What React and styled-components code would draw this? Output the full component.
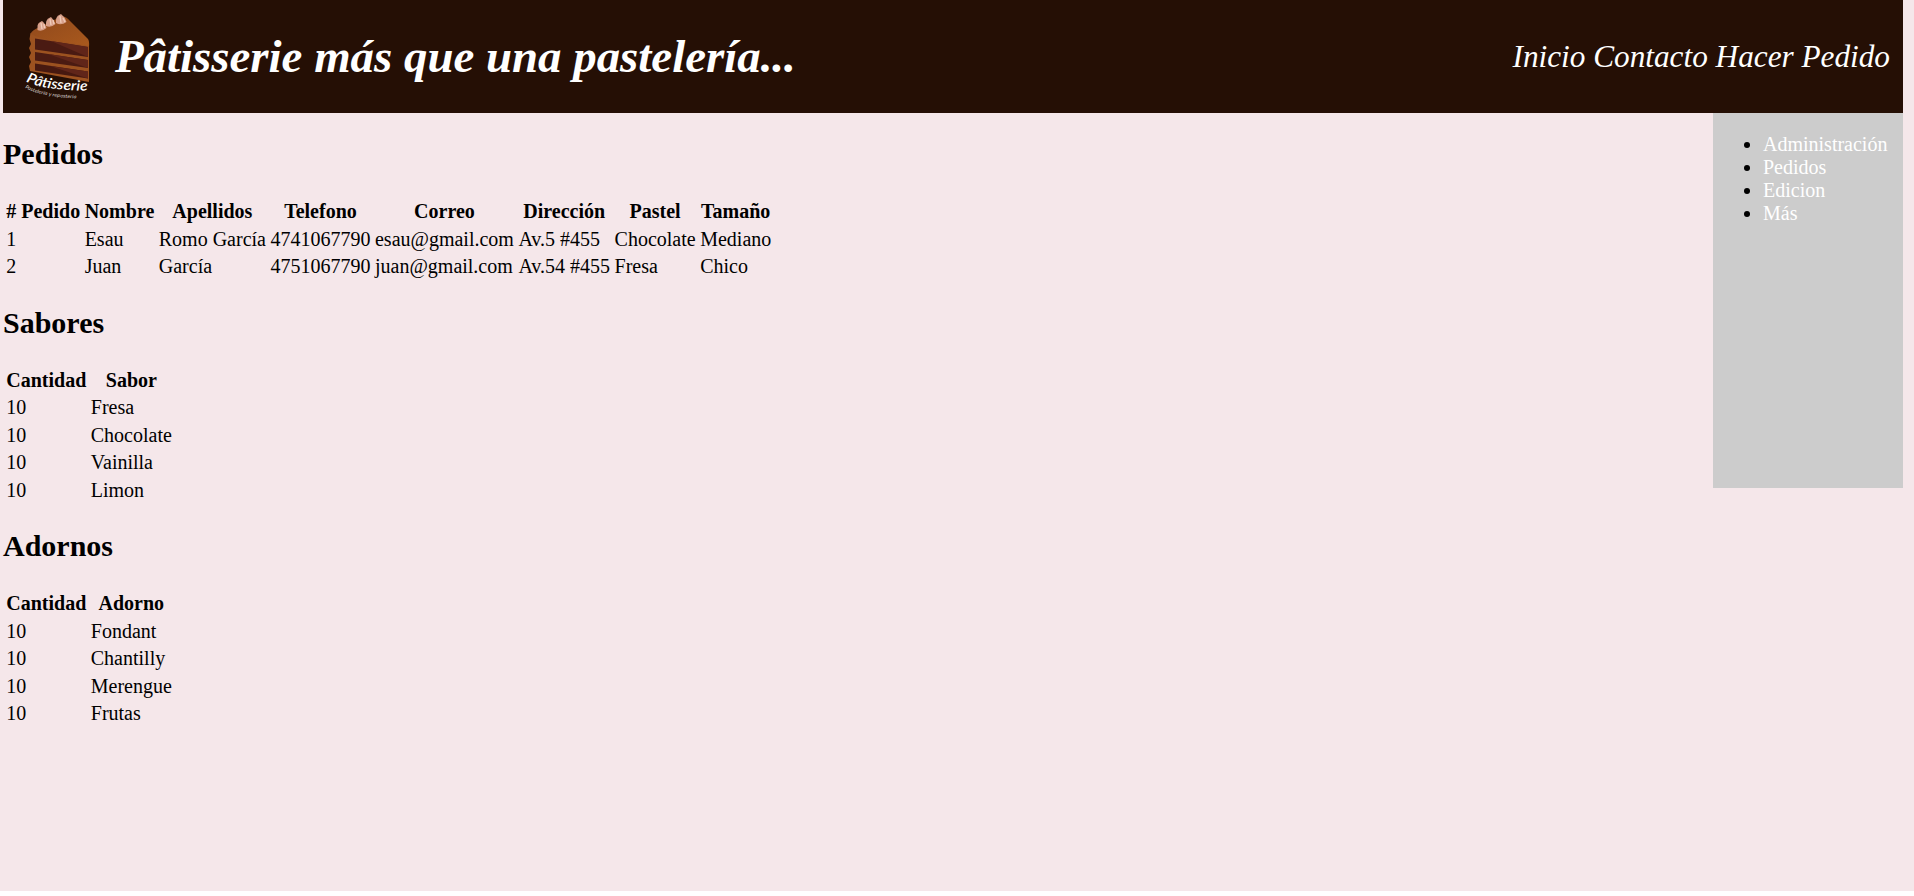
import React from "react";
import styled, { createGlobalStyle } from "styled-components";

const GlobalStyle = createGlobalStyle`
  html {
    background: #fff;
  }

  body {
    margin: 0;
    font-family: "Liberation Serif", "Times New Roman", serif;
    font-size: 20px;
    line-height: 23px;
    color: #000;
  }
`;

const Page = styled.div`
  box-sizing: border-box;
  height: 891px;
  padding: 0 11px 0 3px;
  background: #f5e7ea;
`;

const Header = styled.header`
  display: flex;
  align-items: center;
  height: 113px;
  background: #250f05;
  color: #fff;
`;

const Logo = styled.svg`
  flex: none;
  width: 112px;
  height: 113px;
`;

const Title = styled.h1`
  margin: 0 0 2px;
  font-size: 46.875px;
  line-height: 54px;
  font-style: italic;
  font-weight: bold;
`;

const Nav = styled.nav`
  display: flex;
  gap: 7.8px;
  margin-left: auto;
  padding-right: 13px;
`;

const NavLink = styled.a`
  font-size: 31.25px;
  line-height: 36px;
  font-style: italic;
  color: #fff;
`;

const Body = styled.div`
  display: flex;
  justify-content: space-between;
  align-items: flex-start;
`;

const Content = styled.main`
  display: flex;
  flex-direction: column;
  align-items: flex-start;
`;

const SectionTitle = styled.h2`
  margin: 25px 0 27px;
  font-size: 30px;
  line-height: 32px;
  font-weight: bold;
`;

const Table = styled.table`
  border-spacing: 2.5px;
`;

const HeadCell = styled.th`
  padding: 1.25px;
  font-weight: bold;
  text-align: center;
  white-space: nowrap;
`;

const Cell = styled.td`
  padding: 1.25px;
  white-space: nowrap;
`;

const Sidebar = styled.aside`
  width: 190px;
  height: 375px;
  background: #ccc;
`;

const Menu = styled.ul`
  margin: 20px 0;
  padding-left: 50px;
  line-height: 23px;
`;

const MenuLink = styled.a`
  color: #fff;
`;

const sections = [
  {
    title: "Pedidos",
    columns: ["# Pedido", "Nombre", "Apellidos", "Telefono", "Correo", "Dirección", "Pastel", "Tamaño"],
    rows: [
      ["1", "Esau", "Romo García", "4741067790", "esau@gmail.com", "Av.5 #455", "Chocolate", "Mediano"],
      ["2", "Juan", "García", "4751067790", "juan@gmail.com", "Av.54 #455", "Fresa", "Chico"],
    ],
  },
  {
    title: "Sabores",
    columns: ["Cantidad", "Sabor"],
    rows: [["10", "Fresa"], ["10", "Chocolate"], ["10", "Vainilla"], ["10", "Limon"]],
  },
  {
    title: "Adornos",
    columns: ["Cantidad", "Adorno"],
    rows: [["10", "Fondant"], ["10", "Chantilly"], ["10", "Merengue"], ["10", "Frutas"]],
  },
];

const navItems = ["Inicio", "Contacto", "Hacer Pedido"];
const menuItems = ["Administración", "Pedidos", "Edicion", "Más"];

function CakeLogo() {
  return (
    <Logo viewBox="3 0 112 113" aria-label="Pâtisserie">
      <defs>
        <linearGradient id="icing" x1="0" y1="0" x2="1" y2="1">
          <stop offset="0" stopColor="#8f481c" />
          <stop offset="1" stopColor="#a9591d" />
        </linearGradient>
        <path id="nameCurve" d="M26 81.5 Q46 91 90 90.5" />
        <path id="tagCurve" d="M25 88 Q44 97.5 79 98.5" />
      </defs>
      <path d="M30.5 34 Q32 30 40 27 L62 16 Q67 17 70 21 L88 39 Q89.5 41 89 47 L34 39 Z" fill="url(#icing)" />
      <path d="M30.5 33 Q32 38 89 46 V82 L30 71 L29 66 L31 62 L29 57 L31 53 L29 48 L31 44 L29.5 39 Z" fill="#9c5220" />
      <path d="M35 38.5 L88 47 V57 L35 49.5 Z" fill="#4a1a12" />
      <path d="M35 52 L88 60 V68 L35 60.5 Z" fill="#4b1b12" />
      <path d="M35 63.5 L88 71.5 V78.5 L35 70.5 Z" fill="#471910" />
      <path d="M51 41 L88 47 V57 Z M48 54 L88 60 V68 Z M50 66 L88 71.5 V78.5 Z" fill="#602519" />
      <g fill="#d8a08a">
        <path d="M37.5 27 Q37 23 42 21 Q45 23 46.5 28 Q42 32 37.5 30 Z" />
        <path d="M46 23 Q46 19 51 17 Q54 20 55.5 24 Q51 28 46 26 Z" />
        <path d="M56 20 Q56 16 61 14 Q65 17 66.5 22 Q61 26 56 23 Z" />
      </g>
      <path d="M41 23 L42 29 M44 24 L44.5 28 M50 19 L51 25 M53 20 L54 24 M60 16 L61 23 M63 18 L65 22" stroke="#f0cbb9" strokeWidth="1.3" fill="none" />
      <text fill="#fff" fontFamily="Lato, sans-serif" fontStyle="italic" fontWeight="600" fontSize="14">
        <textPath href="#nameCurve" textLength="63" lengthAdjust="spacingAndGlyphs">Pâtisserie</textPath>
      </text>
      <text fill="#d8d0cc" fontFamily="Lato, sans-serif" fontStyle="italic" fontSize="5">
        <textPath href="#tagCurve" textLength="53" lengthAdjust="spacingAndGlyphs">Pastelería y repostería</textPath>
      </text>
    </Logo>
  );
}

function DataSection({ title, columns, rows }) {
  return (
    <>
      <SectionTitle>{title}</SectionTitle>
      <Table>
        <thead>
          <tr>{columns.map((c) => <HeadCell key={c}>{c}</HeadCell>)}</tr>
        </thead>
        <tbody>
          {rows.map((row, i) => (
            <tr key={i}>{row.map((value, j) => <Cell key={j}>{value}</Cell>)}</tr>
          ))}
        </tbody>
      </Table>
    </>
  );
}

export default function App() {
  return (
    <>
      <GlobalStyle />
      <Page>
        <Header>
          <CakeLogo />
          <Title>Pâtisserie más que una pastelería...</Title>
          <Nav>{navItems.map((item) => <NavLink key={item}>{item}</NavLink>)}</Nav>
        </Header>
        <Body>
          <Content>{sections.map((s) => <DataSection key={s.title} {...s} />)}</Content>
          <Sidebar>
            <Menu>
              {menuItems.map((item) => <li key={item}><MenuLink>{item}</MenuLink></li>)}
            </Menu>
          </Sidebar>
        </Body>
      </Page>
    </>
  );
}
